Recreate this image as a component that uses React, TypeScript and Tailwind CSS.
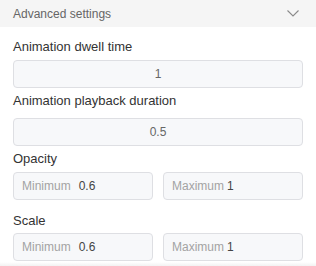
const Chevron = () => (
  <svg width="12" height="7" viewBox="0 0 12 7" fill="none">
    <polyline points="0.5,0.5 6,6 11.5,0.5" stroke="#8a8a8a" strokeWidth="1.1" />
  </svg>
);

const Label = ({ children, className = "" }: { children: string; className?: string }) => (
  <div className={`h-[20px] leading-[20px] text-[13px] font-medium text-[#333] ${className}`}>{children}</div>
);

const RangeBox = ({ prefix, value, gap }: { prefix: string; value: string; gap: string }) => (
  <div className="flex-1 h-[28px] flex items-center px-[8px] bg-[#f7f8fa] border border-[#dedfe3] rounded-[4px] text-[12px]">
    <span className="text-[#a3a3a3]">{prefix}</span>
    <span className={`text-[#444] ${gap}`}>{value}</span>
  </div>
);

export default function App() {
  return (
    <div className="w-[316px] h-[266px] flex flex-col bg-white font-['Liberation_Sans',Arial,sans-serif]">
      <div className="h-[27px] shrink-0 flex items-center justify-between pl-[13px] pr-[17px] bg-[#f5f5f5]">
        <span className="text-[12px] text-[#666]">Advanced settings</span>
        <Chevron />
      </div>

      <div className="flex-1 px-[13px]">
        <Label className="mt-[10px]">Animation dwell time</Label>
        <div className="mt-[3px] h-[28px] flex items-center justify-center bg-[#f7f8fa] border border-[#dedfe3] rounded-[4px] text-[12px] text-[#666]">
          1
        </div>

        <Label className="mt-[3px]">Animation playback duration</Label>
        <div className="mt-[7px] h-[28px] flex items-center justify-center bg-[#f7f8fa] border border-[#dedfe3] rounded-[4px] text-[12px] text-[#666]">
          0.5
        </div>

        <Label className="mt-[3px]">Opacity</Label>
        <div className="mt-[3px] flex gap-[10px]">
          <RangeBox prefix="Minimum" value="0.6" gap="ml-[8px]" />
          <RangeBox prefix="Maximum" value="1" gap="ml-[3px]" />
        </div>

        <Label className="mt-[11px]">Scale</Label>
        <div className="mt-[2px] flex gap-[10px]">
          <RangeBox prefix="Minimum" value="0.6" gap="ml-[8px]" />
          <RangeBox prefix="Maximum" value="1" gap="ml-[3px]" />
        </div>
      </div>

      <div className="h-[4px] shrink-0 bg-gradient-to-b from-white to-[#f2f2f2]" />
    </div>
  );
}
